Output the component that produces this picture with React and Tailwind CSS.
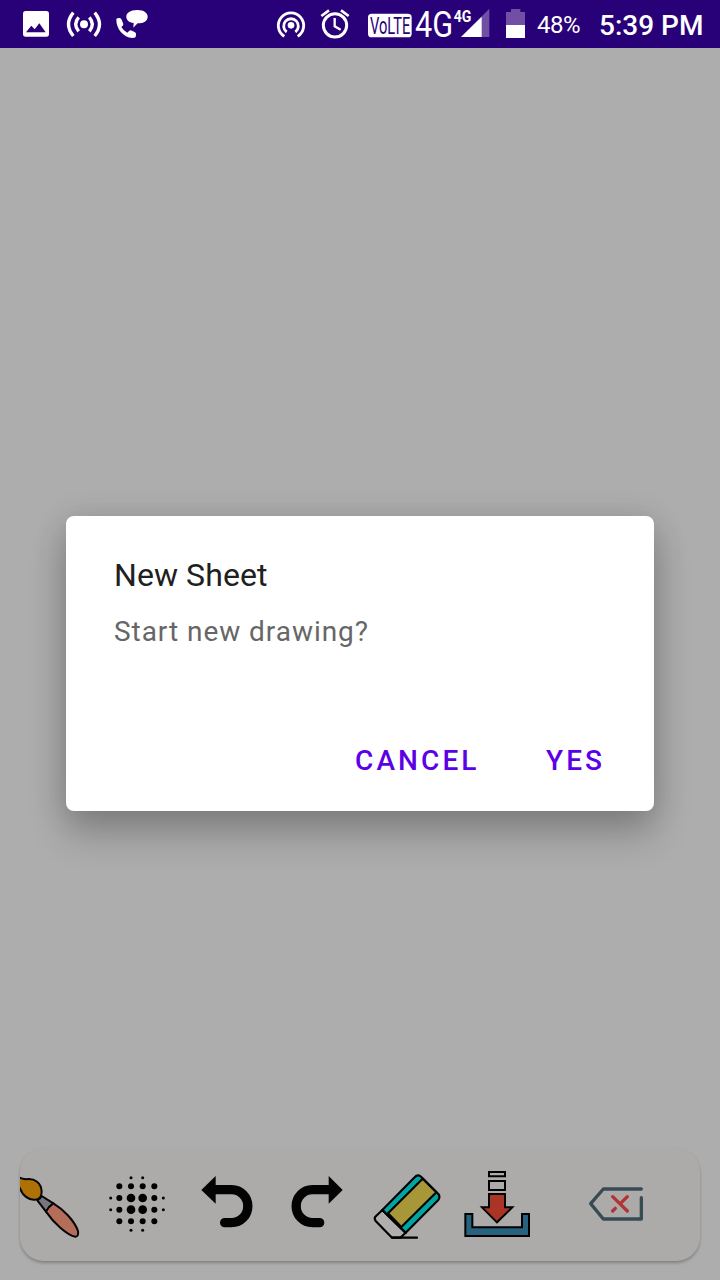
function StatusBar() {
  return (
    <header className="flex h-12 shrink-0 items-center bg-[#280078] text-white">
      <svg className="ml-5 h-12 w-8 shrink-0" viewBox="60 0 96 144">
        <rect x="69" y="33" width="78" height="77" rx="8" fill="#fff" />
        <path d="M78 97 L94 77 L104 88 L118 70 L137 97 Z" fill="#280078" />
      </svg>
      <svg className="ml-3 h-12 w-10 shrink-0" viewBox="192 0 120 144" fill="none" stroke="#fff" strokeWidth="10">
        <circle cx="252" cy="73" r="12" fill="#fff" stroke="none" />
        <path d="M236 52 Q218 73 236 94 M268 52 Q286 73 268 94 M220 38 Q191 73 220 108 M284 38 Q313 73 284 108" />
      </svg>
      <svg className="ml-2 h-12 w-10 shrink-0" viewBox="336 0 120 144" fill="#fff">
        <path d="M410 30 C430 29 443 38 443 50 C443 63 431 70 413 70 Q407 76 400 83 L401 69 C387 67 379 60 379 50 C379 39 391 30 410 30 Z" />
        <path d="M349 57 Q350 54 359 54 Q363 54 365 59 L370 72 Q371 76 364 81 Q370 92 382 98 L388 92 Q391 90 396 92 L405 97 Q409 99 408 104 L407 111 Q404 114 397 114 C370 112 348 87 349 57 Z" />
      </svg>

      <svg className="ml-[122px] h-12 w-[34px] shrink-0" viewBox="42 0 102 144" fill="none" stroke="#fff" strokeWidth="8.5">
        <circle cx="93" cy="76" r="10" fill="#fff" stroke="none" />
        <path d="M73 109 A38 38 0 1 1 113 109" />
        <path d="M80 96 A22 22 0 1 1 106 96" />
      </svg>
      <svg className="ml-2.5 h-12 w-[34px] shrink-0" viewBox="174 0 102 144" fill="none" stroke="#fff">
        <circle cx="225" cy="76" r="35" strokeWidth="9" />
        <path d="M184 48 L207 31 M243 31 L266 48" strokeWidth="8" />
        <path d="M224 54 V79 L242 89" strokeWidth="7" />
      </svg>
      <svg className="ml-3.5 h-12 w-[46px] shrink-0 overflow-visible" viewBox="318 0 138 144">
        <rect x="324" y="41" width="131" height="71" rx="11" fill="#fff" />
        <text x="330" y="103" textLength="121" lengthAdjust="spacingAndGlyphs" fill="#280078" className="font-[Roboto,sans-serif] text-[69px]">VoLTE</text>
      </svg>
      <svg className="ml-0.5 h-12 w-10 shrink-0 overflow-visible" viewBox="462 0 120 144">
        <text x="465" y="112" textLength="114" lengthAdjust="spacingAndGlyphs" fill="#fff" className="font-[Roboto,sans-serif] text-[108px]">4G</text>
      </svg>
      <svg className="-ml-0.5 h-12 w-10 shrink-0 overflow-visible" viewBox="576 0 120 144">
        <path d="M688 26 V111 H603 Z" fill="#704fa5" />
        <path d="M665 50 V111 H603 Z" fill="#fff" />
        <text x="581" y="66" textLength="53" lengthAdjust="spacingAndGlyphs" fill="#fff" className="font-[Roboto,sans-serif] text-[49px] font-bold">4G</text>
      </svg>
      <svg className="ml-3 h-12 w-6 shrink-0" viewBox="72 0 72 144">
        <path d="M78 36 H93 V27 H121 V36 H135 V76 H78 Z" fill="#704fa5" />
        <rect x="78" y="75" width="57" height="39" fill="#fff" />
      </svg>
      <span className="ml-[9px] mt-0.5 w-[62px] whitespace-nowrap font-[Roboto,sans-serif] text-[24px] leading-7 tracking-[-0.5px]">48%</span>
      <span className="mt-1 whitespace-nowrap font-[Roboto,sans-serif] text-[28px] font-medium leading-8">5:39 PM</span>
    </header>
  );
}

const dots = [
  [393, 113, 4.5], [428, 113, 4.5],
  [358, 139, 9], [393, 139, 9], [428, 139, 9], [463, 139, 9],
  [332, 174, 4.5], [358, 174, 9], [393, 174, 13], [428, 174, 13], [463, 174, 9], [490, 174, 4.5],
  [332, 209, 4.5], [358, 209, 9], [393, 209, 13], [428, 209, 13], [463, 209, 9], [490, 209, 4.5],
  [358, 244, 9], [393, 244, 9], [428, 244, 9], [463, 244, 9],
  [393, 271, 4.5], [428, 271, 4.5],
];

function Toolbar() {
  return (
    <footer className="ml-5 mb-[19px] flex h-[113px] w-[680px] shrink-0 items-start overflow-hidden rounded-3xl bg-[#acaba9] pt-3 shadow-[0_2px_3px_rgba(0,0,0,0.25)]">
      <svg className="h-[90px] w-[60px] shrink-0" viewBox="60 60 180 270" stroke="#050505" strokeWidth="6" strokeLinejoin="round">
        <path d="M45 105 Q59 115 77 118 C105 114 124 129 125 155 C125 168 117 178 105 179 C86 181 67 166 60 145 L50 130 Z" fill="#ad7106" />
        <path d="M125 168 L160 190 Q146 199 138 215 L112 181 Q121 178 125 168 Z" fill="#77767c" />
        <path d="M160 190 C190 208 223 242 234 273 Q237 289 226 290 C202 286 159 247 138 215 Q146 199 160 190 Z" fill="#b46d59" />
      </svg>
      <svg className="ml-[25px] h-[90px] w-[65px] shrink-0" viewBox="315 60 195 270">
        {dots.map(([x, y, r]) => <circle key={`${x}-${y}`} cx={x} cy={y} r={r} fill="#000" />)}
      </svg>
      <svg className="ml-7 h-[90px] w-[60px] shrink-0" viewBox="54 60 180 270">
        <path d="M102 149 H155 A48.5 49.5 0 0 1 155 248 H134" fill="none" stroke="#030303" strokeWidth="28" strokeLinecap="round" />
        <path d="M64 150 L107 108 V191 Z" fill="#030303" />
      </svg>
      <svg className="ml-7 h-[90px] w-[60px] shrink-0" viewBox="318 60 180 270">
        <path d="M450 149 H397 A48.5 49.5 0 0 0 397 248 H419" fill="none" stroke="#030303" strokeWidth="28" strokeLinecap="round" />
        <path d="M488 150 L446 108 V191 Z" fill="#030303" />
      </svg>
      <svg className="ml-6 h-[90px] w-[75px] shrink-0" viewBox="30 60 225 270" stroke="#000" strokeWidth="6.5" strokeLinejoin="round" strokeLinecap="round">
        <path d="M67 210 L46 230 Q42 236 47 243 L96 293 H121 L137 278 Z" fill="#b0afad" />
        <path d="M67 210 L164 112 Q174 101 184 111 L235 162 Q242 171 234 181 L137 278 Z" fill="#00a5a1" />
        <path d="M84 220 L188 116 L229 157 L124 261 Z" fill="#a79739" />
        <path d="M67 210 L137 278 M96 293 H171" fill="none" />
      </svg>
      <svg className="ml-[17px] h-[90px] w-[70px] shrink-0" viewBox="306 60 210 270" stroke="#000" strokeWidth="6">
        <path d="M387 96 H435 V109 H387 Z M387 123 H435 V150 H387 Z" fill="#acaba9" />
        <path d="M387 162 H435 V202 H457 L411 247 L366 202 H387 Z" fill="#aa3526" />
        <path d="M316 222 H337 V262 H486 V222 H507 V288 H316 Z" fill="#27627e" />
      </svg>
      <svg className="ml-[54px] h-[90px] w-[62px] shrink-0" viewBox="138 60 186 270" fill="none" strokeLinecap="round" strokeLinejoin="round">
        <path d="M304 147 H190 L152 191 L190 237 H304 V173" stroke="#384b54" strokeWidth="10" />
        <path d="M218 170 L262 213 M262 170 L241 191 M226 205 L218 213" stroke="#b33236" strokeWidth="10" />
      </svg>
    </footer>
  );
}

function Dialog() {
  return (
    <div className="absolute inset-0 flex items-start justify-center pt-[516px]">
      <section role="dialog" className="flex h-[295px] w-[588px] flex-col rounded-lg bg-white font-[Roboto,sans-serif] shadow-[0_24px_38px_rgba(0,0,0,0.2),0_4px_32px_rgba(0,0,0,0.16)]">
        <h1 className="ml-12 mt-[39px] text-[32px] leading-10 tracking-[0.08px] text-[#202020]">New Sheet</h1>
        <p className="ml-12 mt-[19px] text-[28px] leading-9 tracking-[0.95px] text-[#666]">Start new drawing?</p>
        <div className="mt-[93px] flex text-[28px] font-medium leading-9 tracking-[3.1px] text-[#5c00e6]">
          <button className="ml-[289px] w-[191px] text-left">CANCEL</button>
          <button className="text-left">YES</button>
        </div>
      </section>
    </div>
  );
}

export default function App() {
  return (
    <div className="relative flex h-[1280px] w-[720px] flex-col overflow-hidden bg-[#adadad]">
      <StatusBar />
      <main className="flex-1" />
      <Toolbar />
      <Dialog />
    </div>
  );
}
